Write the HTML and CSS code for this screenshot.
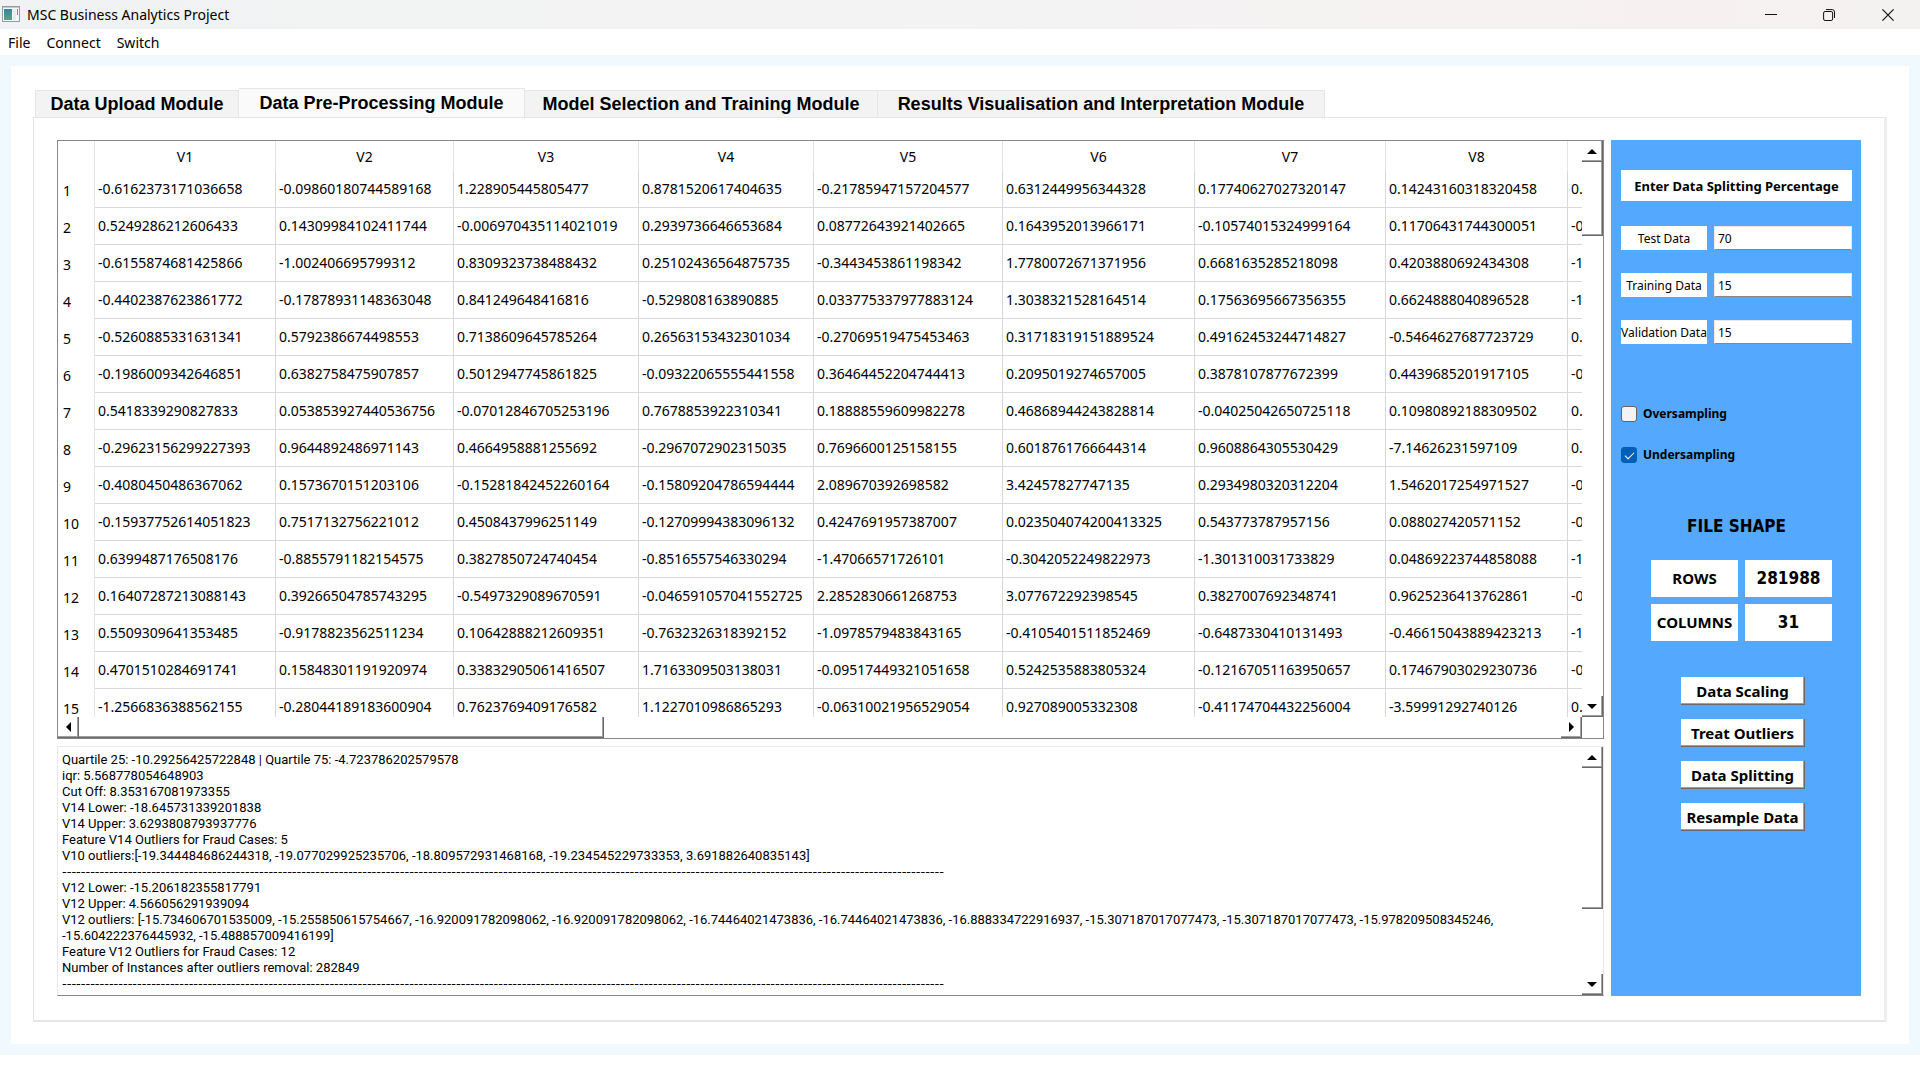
FILE: index.html
```html
<!DOCTYPE html>
<html lang="en">
<head>
<meta charset="utf-8">
<title>MSC Business Analytics Project</title>
<link rel="stylesheet" href="styles.css">
</head>
<body>
<header class="titlebar">
  <svg class="app-icon" width="18" height="16" viewBox="0 0 18 16"><defs><linearGradient id="g" x1="0" y1="0" x2="0" y2="1"><stop offset="0" stop-color="#3f7fa3"/><stop offset="1" stop-color="#5aa581"/></linearGradient></defs><rect x=".5" y=".5" width="17" height="15" fill="#f6f9fa" stroke="#949ba0"/><path d="M1 1.500h16" stroke="#c3c8cb"/><rect x="2" y="3" width="8" height="11" fill="url(#g)"/><rect x="11" y="3" width="3" height="11" fill="#e6ebed"/><rect x="15" y="3" width="1" height="6" fill="#4d9bb0"/></svg>
  <h1 class="title">MSC Business Analytics Project</h1>
  <div class="window-controls">
    <button class="win-btn" type="button" aria-label="Minimize"><svg width="12" height="12" viewBox="0 0 12 12"><path d="M0 5.500h12" stroke="#111"/></svg></button>
    <button class="win-btn" type="button" aria-label="Restore"><svg width="12" height="12" viewBox="0 0 12 12" fill="none" stroke="#111"><rect x=".6" y="2.500" width="9" height="9" rx="1.500"/><path d="M3 .6h6.200a2.300 2.300 0 0 1 2.300 2.300V9"/></svg></button>
    <button class="win-btn" type="button" aria-label="Close"><svg width="12" height="12" viewBox="0 0 12 12"><path d="M.4.4l11.200 11.200M11.600.4L.4 11.600" stroke="#111" stroke-width="1.200"/></svg></button>
  </div>
</header>
<nav class="menubar">
  <button type="button">File</button>
  <button type="button">Connect</button>
  <button type="button">Switch</button>
</nav>
<main class="workspace">
  <div class="card">
    <div class="tabs" role="tablist">
      <button class="tab tab-upload" role="tab" type="button">Data Upload Module</button>
      <button class="tab tab-prep active" role="tab" type="button" aria-selected="true">Data Pre-Processing Module</button>
      <button class="tab tab-model" role="tab" type="button">Model Selection and Training Module</button>
      <button class="tab tab-results" role="tab" type="button">Results Visualisation and Interpretation Module</button>
    </div>
    <section class="pane">
      <div class="left">
        <div class="grid-frame">
          <div class="viewport">
            <table class="data">
              <colgroup><col class="c0"><col class="c1"><col class="c2"><col class="c3"><col class="c4"><col class="c5"><col class="c6"><col class="c7"><col class="c8"><col class="c9"></colgroup>
              <thead><tr><th></th><th>V1</th><th>V2</th><th>V3</th><th>V4</th><th>V5</th><th>V6</th><th>V7</th><th>V8</th><th></th></tr></thead>
              <tbody>
              <tr><th>1</th><td>-0.6162373171036658</td><td>-0.09860180744589168</td><td>1.228905445805477</td><td>0.8781520617404635</td><td>-0.21785947157204577</td><td>0.6312449956344328</td><td>0.17740627027320147</td><td>0.14243160318320458</td><td>0.</td></tr>
              <tr><th>2</th><td>0.5249286212606433</td><td>0.14309984102411744</td><td>-0.006970435114021019</td><td>0.2939736646653684</td><td>0.08772643921402665</td><td>0.1643952013966171</td><td>-0.10574015324999164</td><td>0.11706431744300051</td><td>-0</td></tr>
              <tr><th>3</th><td>-0.6155874681425866</td><td>-1.002406695799312</td><td>0.8309323738488432</td><td>0.25102436564875735</td><td>-0.3443453861198342</td><td>1.7780072671371956</td><td>0.6681635285218098</td><td>0.4203880692434308</td><td>-1</td></tr>
              <tr><th>4</th><td>-0.4402387623861772</td><td>-0.17878931148363048</td><td>0.841249648416816</td><td>-0.529808163890885</td><td>0.033775337977883124</td><td>1.3038321528164514</td><td>0.17563695667356355</td><td>0.6624888040896528</td><td>-1</td></tr>
              <tr><th>5</th><td>-0.5260885331631341</td><td>0.5792386674498553</td><td>0.7138609645785264</td><td>0.26563153432301034</td><td>-0.27069519475453463</td><td>0.31718319151889524</td><td>0.49162453244714827</td><td>-0.5464627687723729</td><td>0.</td></tr>
              <tr><th>6</th><td>-0.1986009342646851</td><td>0.6382758475907857</td><td>0.5012947745861825</td><td>-0.09322065555441558</td><td>0.36464452204744413</td><td>0.2095019274657005</td><td>0.3878107877672399</td><td>0.4439685201917105</td><td>-0</td></tr>
              <tr><th>7</th><td>0.5418339290827833</td><td>0.053853927440536756</td><td>-0.07012846705253196</td><td>0.7678853922310341</td><td>0.18888559609982278</td><td>0.46868944243828814</td><td>-0.04025042650725118</td><td>0.10980892188309502</td><td>0.</td></tr>
              <tr><th>8</th><td>-0.29623156299227393</td><td>0.9644892486971143</td><td>0.4664958881255692</td><td>-0.2967072902315035</td><td>0.7696600125158155</td><td>0.6018761766644314</td><td>0.9608864305530429</td><td>-7.14626231597109</td><td>0.</td></tr>
              <tr><th>9</th><td>-0.4080450486367062</td><td>0.1573670151203106</td><td>-0.15281842452260164</td><td>-0.15809204786594444</td><td>2.089670392698582</td><td>3.42457827747135</td><td>0.2934980320312204</td><td>1.5462017254971527</td><td>-0</td></tr>
              <tr><th>10</th><td>-0.15937752614051823</td><td>0.7517132756221012</td><td>0.4508437996251149</td><td>-0.12709994383096132</td><td>0.4247691957387007</td><td>0.023504074200413325</td><td>0.543773787957156</td><td>0.088027420571152</td><td>-0</td></tr>
              <tr><th>11</th><td>0.6399487176508176</td><td>-0.8855791182154575</td><td>0.3827850724740454</td><td>-0.8516557546330294</td><td>-1.47066571726101</td><td>-0.3042052249822973</td><td>-1.301310031733829</td><td>0.04869223744858088</td><td>-1</td></tr>
              <tr><th>12</th><td>0.16407287213088143</td><td>0.39266504785743295</td><td>-0.5497329089670591</td><td>-0.046591057041552725</td><td>2.2852830661268753</td><td>3.077672292398545</td><td>0.3827007692348741</td><td>0.9625236413762861</td><td>-0</td></tr>
              <tr><th>13</th><td>0.5509309641353485</td><td>-0.9178823562511234</td><td>0.10642888212609351</td><td>-0.7632326318392152</td><td>-1.0978579483843165</td><td>-0.4105401511852469</td><td>-0.6487330410131493</td><td>-0.46615043889423213</td><td>-1</td></tr>
              <tr><th>14</th><td>0.4701510284691741</td><td>0.15848301191920974</td><td>0.33832905061416507</td><td>1.7163309503138031</td><td>-0.09517449321051658</td><td>0.5242535883805324</td><td>-0.12167051163950657</td><td>0.17467903029230736</td><td>-0</td></tr>
              <tr><th>15</th><td>-1.2566836388562155</td><td>-0.28044189183600904</td><td>0.7623769409176582</td><td>1.1227010986865293</td><td>-0.06310021956529054</td><td>0.927089005332308</td><td>-0.41174704432256004</td><td>-3.59991292740126</td><td>0.</td></tr>
              </tbody>
            </table>
          </div>
          <div class="vbar">
            <button class="sb-btn" type="button" aria-label="Scroll up"><svg width="10" height="5" viewBox="0 0 10 5"><path d="M5 0l5 5H0z"/></svg></button>
            <div class="track"><div class="thumb thumb-table"></div></div>
            <button class="sb-btn" type="button" aria-label="Scroll down"><svg width="10" height="5" viewBox="0 0 10 5"><path d="M0 0h10L5 5z"/></svg></button>
          </div>
          <div class="hbar">
            <button class="sb-btn" type="button" aria-label="Scroll left"><svg width="5" height="10" viewBox="0 0 5 10"><path d="M5 0v10L0 5z"/></svg></button>
            <div class="track"><div class="thumb thumb-wide"></div></div>
            <button class="sb-btn" type="button" aria-label="Scroll right"><svg width="5" height="10" viewBox="0 0 5 10"><path d="M0 0v10l5-5z"/></svg></button>
          </div>
        </div>
        <div class="log-frame">
          <div class="log">
            <p>Quartile 25: -10.29256425722848 | Quartile 75: -4.723786202579578</p>
            <p>iqr: 5.568778054648903</p>
            <p>Cut Off: 8.353167081973355</p>
            <p>V14 Lower: -18.645731339201838</p>
            <p>V14 Upper: 3.6293808793937776</p>
            <p>Feature V14 Outliers for Fraud Cases: 5</p>
            <p>V10 outliers:[-19.344484686244318, -19.077029925235706, -18.809572931468168, -19.234545229733353, 3.691882640835143]</p>
            <p class="dashes">--------------------------------------------------------------------------------------------------------------------------------------------------------------------------------------------</p>
            <p>V12 Lower: -15.206182355817791</p>
            <p>V12 Upper: 4.566056291939094</p>
            <p>V12 outliers: [-15.734606701535009, -15.255850615754667, -16.920091782098062, -16.920091782098062, -16.74464021473836, -16.74464021473836, -16.888334722916937, -15.307187017077473, -15.307187017077473, -15.978209508345246, -15.604222376445932, -15.488857009416199]</p>
            <p>Feature V12 Outliers for Fraud Cases: 12</p>
            <p>Number of Instances after outliers removal: 282849</p>
            <p class="dashes">--------------------------------------------------------------------------------------------------------------------------------------------------------------------------------------------</p>
          </div>
          <div class="vbar">
            <button class="sb-btn" type="button" aria-label="Scroll up"><svg width="10" height="5" viewBox="0 0 10 5"><path d="M5 0l5 5H0z"/></svg></button>
            <div class="track"><div class="thumb thumb-log"></div></div>
            <button class="sb-btn" type="button" aria-label="Scroll down"><svg width="10" height="5" viewBox="0 0 10 5"><path d="M0 0h10L5 5z"/></svg></button>
          </div>
        </div>
      </div>
      <aside class="side">
        <h2 class="side-title">Enter Data Splitting Percentage</h2>
        <div class="fields">
          <label for="test">Test Data</label><input id="test" type="text" value="70">
          <label for="train">Training Data</label><input id="train" type="text" value="15">
          <label for="valid">Validation Data</label><input id="valid" type="text" value="15">
        </div>
        <div class="checks">
          <label><input type="checkbox">Oversampling</label>
          <label><input type="checkbox" checked>Undersampling</label>
        </div>
        <h2 class="shape-title">FILE SHAPE</h2>
        <dl class="shape">
          <dt>ROWS</dt><dd>281988</dd>
          <dt>COLUMNS</dt><dd>31</dd>
        </dl>
        <div class="actions">
          <button type="button">Data Scaling</button>
          <button type="button">Treat Outliers</button>
          <button type="button">Data Splitting</button>
          <button type="button">Resample Data</button>
        </div>
      </aside>
    </section>
  </div>
</main>
</body>
</html>
```
FILE: styles.css
```css
* { box-sizing: border-box; }

body {
  margin: 0;
  height: 100vh;
  min-height: 900px;
  padding-bottom: 25px;
  display: flex;
  flex-direction: column;
  background: #fff;
  color: #000;
  font: 14px/20px "Noto Sans", "Open Sans", sans-serif;
}

button, input { font: inherit; color: inherit; }
button { border: 0; padding: 0; background: none; white-space: nowrap; }
h1, h2, p, dl, dd { margin: 0; }

.titlebar {
  flex: none;
  height: 29px;
  display: flex;
  align-items: center;
  padding-left: 2px;
  background: linear-gradient(90deg, #f1f2f3, #f3f3f3 50%, #f6f1f0 88%, #f3f2f1);
}
.title { margin-left: 7px; font-size: 14px; font-weight: 400; }
.app-icon { margin-bottom: 2px; }
.window-controls { margin-left: auto; display: flex; height: 100%; }
.win-btn { width: 58px; display: flex; align-items: center; justify-content: center; }
.win-btn:last-child { width: 62px; padding-right: 2px; }

.menubar { flex: none; height: 26px; display: flex; align-items: center; gap: 16px; padding: 2px 8px 0; }

.workspace { flex: 1; min-height: 0; padding: 11px; background: #f0f9fd; }
.card { height: 100%; display: flex; flex-direction: column; padding: 22px; background: #fff; }

.tabs { flex: none; display: flex; align-items: flex-end; padding-left: 2px; height: 29px; }
.tab {
  height: 27px;
  padding-bottom: 1px;
  border: 1px solid #e6e6e6;
  border-width: 1px 1px 0 0;
  background: #f3f3f3;
  font: bold 18px/24px "Liberation Sans", Arial, sans-serif;
}
.tab:first-child { border-left-width: 1px; }
.tab.active { height: 29px; background: #fafafa; }
.tab-upload { width: 204px; }
.tab-prep { width: 286px; }
.tab-model { width: 353px; }
.tab-results { width: 447px; }

.pane {
  flex: 1;
  min-height: 0;
  display: flex;
  gap: 7px;
  padding: 22px 23px 24px;
  border: 1px solid #e5e5e5;
  border-width: 1px 3px 2px 1px;
  border-right-color: #efefef;
}
.left { flex: 1; min-width: 0; display: flex; flex-direction: column; gap: 7px; }

.grid-frame {
  flex: 1;
  min-height: 0;
  display: grid;
  grid-template: minmax(0, 1fr) 21px / minmax(0, 1fr) 21px;
  border: 1px solid #828790;
}
.viewport { overflow: hidden; }

.data { width: 1533px; table-layout: fixed; border-collapse: separate; border-spacing: 0; }
.c0 { width: 37px; }
.c1 { width: 181px; }
.c2 { width: 178px; }
.c3 { width: 185px; }
.c4 { width: 175px; }
.c5 { width: 189px; }
.c6 { width: 192px; }
.c7 { width: 191px; }
.c8 { width: 182px; }
.c9 { width: 23px; }
.data th, .data td { padding: 0 0 0 3px; font-weight: 400; text-align: left; border-right: 1px solid #d8d8d8; white-space: nowrap; }
.data td { height: 37px; border-bottom: 1px solid #d8d8d8; }
.data thead th { height: 30px; padding: 1px 0 0; text-align: center; border-color: #e5e5e5; }
.data tbody th { padding: 2px 0 0 5px; border-color: #e5e5e5; }
.data tr > :last-child { border-right: 0; }

.vbar { display: flex; flex-direction: column; }
.hbar { display: flex; }
.track { flex: 1; min-width: 0; min-height: 0; }
.sb-btn { flex: none; width: 21px; height: 21px; display: flex; align-items: center; justify-content: center; }
.sb-btn, .thumb { border: 1px solid #696969; border-width: 0 1px 1px 0; box-shadow: inset -1px -1px #a0a0a0; }
.thumb-table { height: 74px; }
.thumb-log { height: 141px; }
.thumb-wide { width: 525px; height: 21px; }

.log-frame {
  flex: none;
  height: 250px;
  display: flex;
  border: 1px solid #e8e8e8;
  border-bottom-color: #868686;
}
.log { flex: 1; min-width: 0; overflow: hidden; padding: 5px 4px 0; font: 13px/16px Roboto, "Liberation Sans", sans-serif; }
.dashes { font-family: "DejaVu Sans", sans-serif; white-space: nowrap; }

.side { flex: none; width: 250px; padding: 30px 9px 0 10px; background: #54a8fd; }
.side-title { padding-top: 1px; background: #fff; font-size: 13px; line-height: 30px; text-align: center; }
.fields {
  margin-top: 25px;
  display: grid;
  grid-template-columns: 86px 1fr;
  gap: 23px 7px;
  font-size: 12px;
}
.fields label { height: 24px; padding-top: 1px; line-height: 23px; background: #fff; text-align: center; white-space: nowrap; }
.fields input {
  width: 100%;
  height: 24px;
  padding: 0 3px;
  border: 1px solid #e8e8e8;
  border-bottom-color: #868686;
  background: #fff;
}
.checks { margin-top: 60px; display: grid; gap: 21px; font-size: 12px; font-weight: 700; }
.checks label { display: flex; align-items: center; gap: 6px; }
.checks input {
  appearance: none;
  width: 16px;
  height: 16px;
  margin: 0;
  border: 1px solid #626262;
  border-radius: 3px;
  background: #f3f3f3;
  display: grid;
  place-items: center;
}
.checks input:checked { border-color: #005fb8; background: #005fb8; }
.checks input:checked::after {
  content: "";
  width: 8px;
  height: 4px;
  border: solid #fff;
  border-width: 0 0 1px 1px;
  transform: translateY(-1px) rotate(-45deg);
}
.shape-title { margin-top: 49px; font: bold 17px/24px "DejaVu Sans Condensed", "DejaVu Sans", sans-serif; text-align: center; }
.shape {
  margin-top: 22px;
  display: grid;
  grid-template-columns: 87px 87px;
  gap: 7px;
  justify-content: center;
  padding-left: 10px;
  text-align: center;
  line-height: 37px;
}
.shape dt, .shape dd { height: 37px; background: #fff; font-weight: 700; }
.shape dt { font-size: 15px; }
.shape dd { font-size: 17px; font-family: "DejaVu Sans Condensed", "DejaVu Sans", sans-serif; }
.actions { margin-top: 36px; padding-left: 13px; display: grid; justify-content: center; gap: 14px; }
.actions button {
  width: 124px;
  height: 28px;
  background: #fff;
  border: 1px solid #696969;
  border-width: 0 1px 1px 0;
  box-shadow: inset -1px -1px #a0a0a0;
  font-size: 15px;
  font-weight: 700;
}
```
